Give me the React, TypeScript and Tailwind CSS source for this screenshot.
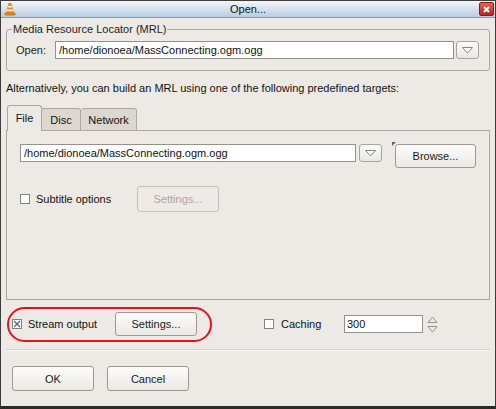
import React from 'react';

const Btn: React.FC<{ label: string; w: string; h: string; disabled?: boolean; className?: string }> = ({
  label,
  w,
  h,
  disabled,
  className = '',
}) => (
  <div
    className={`${w} ${h} ${className} flex items-center justify-center rounded-[3px] border ${
      disabled
        ? 'border-[#c4c1ba] text-[#a9a6a0] bg-[#eeebe7]'
        : 'border-[#9e9a93] text-[#1a1a1a] bg-gradient-to-b from-[#fcfcfb] to-[#ebe9e4]'
    }`}
  >
    {label}
  </div>
);

const DropBtn: React.FC = () => (
  <div className="w-[23px] h-[18px] flex items-center justify-center rounded-[3px] border border-[#a8a49d] bg-gradient-to-b from-[#fbfbfa] to-[#e9e7e2]">
    <svg width="11" height="7" viewBox="0 0 11 7">
      <polygon points="0.5,0.5 10.5,0.5 5.5,6" fill="white" stroke="#8a8780" strokeWidth="1" />
    </svg>
  </div>
);

const Check: React.FC<{ checked?: boolean }> = ({ checked }) => (
  <div className="w-[10px] h-[10px] border border-[#85827c] bg-white flex items-center justify-center">
    {checked && (
      <svg width="8" height="8" viewBox="0 0 8 8">
        <path d="M1 1L7 7M7 1L1 7" stroke="#4f6a93" strokeWidth="1.4" />
      </svg>
    )}
  </div>
);

const App: React.FC = () => {
  return (
    <div className="w-[496px] h-[409px] bg-[#edeae5] border border-[#3d3d3d] border-b-[3px] border-b-[#2a2a2a] flex flex-col font-['Liberation_Sans',Arial,sans-serif] text-[11px] leading-[14px] text-[#111] overflow-hidden">
      {/* Title bar */}
      <div className="h-[17px] shrink-0 relative flex items-center justify-center bg-gradient-to-b from-[#f3f6fa] to-[#b9cde3] border-b border-[#8d97a3]">
        <svg className="absolute left-[3px] top-[1px]" width="12" height="14" viewBox="0 0 12 14">
          <path d="M4.5 1 L7.5 1 L10 11 L2 11 Z" fill="#f08a1c" />
          <path d="M4.1 4 L7.9 4 L8.3 5.6 L3.7 5.6 Z" fill="#fff3e0" />
          <path d="M3.2 7.6 L8.8 7.6 L9.2 9.2 L2.8 9.2 Z" fill="#fff3e0" />
          <rect x="0.5" y="10.5" width="11" height="3" rx="1" fill="#e0791a" />
        </svg>
        <span>Open...</span>
        <div className="absolute right-[1px] top-[1px] w-[15px] h-[14px] rounded-[2px] bg-gradient-to-b from-[#e8604f] to-[#b8241a] border border-[#8e1a12] flex items-center justify-center">
          <svg width="7" height="7" viewBox="0 0 7 7">
            <path d="M1 1L6 6M6 1L1 6" stroke="white" strokeWidth="1.8" />
          </svg>
        </div>
      </div>

      <div className="flex flex-col pl-[5px] pr-[5px]">
        {/* MRL group */}
        <div className="mt-[11px] h-[42px] border border-[#aca89f] rounded-[3px] relative flex items-center pl-[9px]">
          <span className="absolute left-[5px] -top-[8px] bg-[#edeae5] px-[1px] text-[#222]">
            Media Resource Locator (MRL)
          </span>
          <span className="w-[39px] text-[#222]">Open:</span>
          <div className="w-[399px] h-[18px] bg-white border border-[#95928b] flex items-center pl-[3px]">
            /home/dionoea/MassConnecting.ogm.ogg
          </div>
          <div className="ml-[2px]">
            <DropBtn />
          </div>
        </div>

        <div className="mt-[10px] text-[#111]">
          Alternatively, you can build an MRL using one of the following predefined targets:
        </div>

        {/* Tabs */}
        <div className="mt-[10px] flex items-end pl-[1px] relative z-10 -mb-[1px]">
          <div className="w-[35px] h-[26px] bg-[#edeae5] border border-b-0 border-[#aca89f] rounded-t-[3px] flex items-center justify-center pb-[2px]">
            File
          </div>
          <div className="w-[39px] h-[23px] bg-[#dcd8cf] border border-[#aca89f] border-l-0 rounded-tr-[3px] flex items-center justify-center">
            Disc
          </div>
          <div className="w-[56px] h-[23px] bg-[#dcd8cf] border border-[#aca89f] border-l-0 rounded-t-[3px] flex items-center justify-center">
            Network
          </div>
        </div>
        <div className="h-[170px] border border-[#aca89f] flex flex-col pl-[13px] pt-[13px]">
          <div className="flex items-start">
            <div className="w-[336px] h-[18px] bg-white border border-[#95928b] flex items-center pl-[3px]">
              /home/dionoea/MassConnecting.ogm.ogg
            </div>
            <div className="ml-[3px]">
              <DropBtn />
            </div>
            <div className="ml-[13px] relative">
              <svg className="absolute -left-[3px] -top-[2px]" width="4" height="4" viewBox="0 0 4 4">
                <polygon points="0,0 4,0 0,4" fill="#55647a" />
              </svg>
              <Btn label="Browse..." w="w-[81px]" h="h-[24px]" />
            </div>
          </div>
          <div className="mt-[18px] flex items-center">
            <Check />
            <span className="ml-[6px] w-[101px]">Subtitle options</span>
            <Btn label="Settings..." w="w-[82px]" h="h-[26px]" disabled />
          </div>
        </div>

        {/* Stream / caching row */}
        <div className="mt-[12px] h-[24px] relative flex items-center">
          <div className="absolute left-[1px] -top-[5px] w-[205px] h-[35px] rounded-[18px] border-2 border-[#e3131c]" />
          <div className="ml-[6px]">
            <Check checked />
          </div>
          <span className="ml-[6px] w-[87px]">Stream output</span>
          <Btn label="Settings..." w="w-[82px]" h="h-[24px]" />
          <div className="ml-[67px]">
            <Check />
          </div>
          <span className="ml-[7px] w-[63px]">Caching</span>
          <div className="w-[79px] h-[18px] bg-white border border-[#95928b] flex items-center pl-[2px]">300</div>
          <svg className="ml-[4px]" width="11" height="17" viewBox="0 0 11 17">
            <polygon points="5.5,1 10,6.5 1,6.5" fill="none" stroke="#96938c" />
            <polygon points="1,10.5 10,10.5 5.5,16" fill="none" stroke="#96938c" />
          </svg>
        </div>

        <div className="mt-[13px] border-t border-[#d6d2cb] border-b border-b-[#f8f7f5]" />

        {/* Dialog buttons */}
        <div className="mt-[15px] flex pl-[6px] gap-[13px]">
          <Btn label="OK" w="w-[82px]" h="h-[25px]" />
          <Btn label="Cancel" w="w-[82px]" h="h-[25px]" />
        </div>
      </div>
    </div>
  );
};

export default App;
